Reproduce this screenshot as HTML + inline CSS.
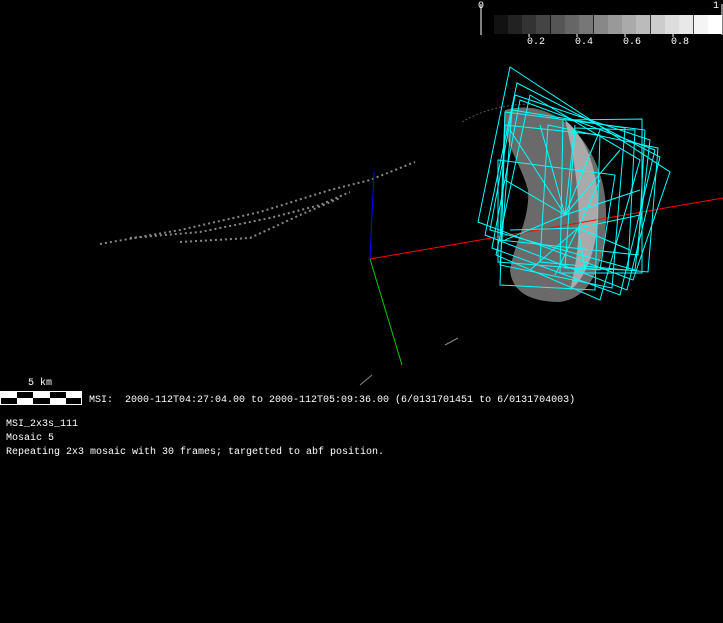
<!DOCTYPE html>
<html><head><style>
body{margin:0;background:#000;width:723px;height:623px;overflow:hidden;position:relative;font-family:"Liberation Mono",monospace;font-size:10px;color:#fff}
.t{position:absolute;white-space:pre;line-height:12px}
</style></head><body>
<svg width="723" height="623" style="position:absolute;left:0;top:0">
<g>
<line x1="481" y1="4" x2="481" y2="35" stroke="#fff"/>
<line x1="722" y1="4" x2="722" y2="35" stroke="#fff"/>
<rect x="494" y="15" width="14.3" height="19" fill="#121212"/>
<rect x="508" y="15" width="14.3" height="19" fill="#222"/>
<rect x="522" y="15" width="14.3" height="19" fill="#333"/>
<rect x="536" y="15" width="14.3" height="19" fill="#444"/>
<rect x="551" y="15" width="14.3" height="19" fill="#555"/>
<rect x="565" y="15" width="14.3" height="19" fill="#666"/>
<rect x="579" y="15" width="14.3" height="19" fill="#777"/>
<rect x="594" y="15" width="14.3" height="19" fill="#888"/>
<rect x="608" y="15" width="14.3" height="19" fill="#999"/>
<rect x="622" y="15" width="14.3" height="19" fill="#aaa"/>
<rect x="636" y="15" width="14.3" height="19" fill="#bbb"/>
<rect x="651" y="15" width="14.3" height="19" fill="#ccc"/>
<rect x="665" y="15" width="14.3" height="19" fill="#ddd"/>
<rect x="679" y="15" width="14.3" height="19" fill="#e8e8e8"/>
<rect x="694" y="15" width="14.3" height="19" fill="#f4f4f4"/>
<rect x="708" y="15" width="14" height="19" fill="#fff"/>
<g stroke="#fff"><line x1="529" y1="34" x2="529" y2="37"/><line x1="577" y1="34" x2="577" y2="37"/><line x1="625" y1="34" x2="625" y2="37"/><line x1="673" y1="34" x2="673" y2="37"/></g>
</g>
<g stroke="#888" stroke-width="2" stroke-dasharray="2 3" fill="none">
<path d="M100,244 L180,230 L260,212 L330,190 L370,180 L415,162"/>
<path d="M130,238 L200,232 L270,218 L320,205 L350,192"/>
<path d="M180,242 L250,238 L300,215 L340,198"/>
</g>
<path d="M462,122 Q490,105 530,104" stroke="#555" fill="none" stroke-dasharray="2 2"/>
<path d="M505,110 C560,95 605,150 606,210 C607,260 592,298 560,302 C530,302 512,292 510,270 C515,240 530,220 528,190 C520,160 500,140 505,110Z" fill="#6a6a6a"/>
<path d="M565,120 C590,140 600,180 598,220 C596,250 585,280 570,290 C580,250 585,200 565,120Z" fill="#aaa"/>
<!-- axes -->
<line x1="370" y1="259" x2="723" y2="198" stroke="#f00"/>
<line x1="370" y1="259" x2="374" y2="172" stroke="#00f"/>
<line x1="370" y1="259" x2="402" y2="365" stroke="#0c0"/>
<path d="M360,385 L372,375 M445,345 L458,338" stroke="#888"/>
<g fill="none" stroke="#0ff" stroke-width="1">
<polygon points="510,67 670,172 633,280 478,222"/>
<polygon points="517,83 660,157 627,290 485,235"/>
<polygon points="563,120 642,119 642,273 560,273"/>
<polygon points="515,95 650,140 635,270 490,230"/>
<polygon points="505,112 645,130 638,255 500,240"/>
<polygon points="520,100 655,150 620,295 492,248"/>
<polygon points="548,125 658,148 648,272 540,262"/>
<polygon points="505,125 600,135 595,290 500,285"/>
<polygon points="512,110 625,128 612,288 500,265"/>
<polygon points="530,95 640,160 600,300 496,255"/>
<polygon points="575,128 635,130 628,270 565,268"/>
<polygon points="498,160 615,175 600,270 498,262"/>
</g>
<g stroke="#0ff" stroke-width="1">
<line x1="565" y1="215" x2="510" y2="130"/><line x1="565" y1="215" x2="540" y2="125"/><line x1="565" y1="215" x2="575" y2="125"/><line x1="565" y1="215" x2="620" y2="150"/><line x1="565" y1="215" x2="505" y2="180"/><line x1="565" y1="215" x2="640" y2="190"/><line x1="565" y1="215" x2="505" y2="240"/><line x1="565" y1="215" x2="600" y2="130"/>
<line x1="578" y1="228" x2="530" y2="270"/><line x1="578" y1="228" x2="555" y2="275"/><line x1="578" y1="228" x2="585" y2="270"/><line x1="578" y1="228" x2="630" y2="250"/><line x1="578" y1="228" x2="640" y2="215"/><line x1="578" y1="228" x2="600" y2="180"/><line x1="578" y1="228" x2="510" y2="230"/>
</g>
<rect x="0" y="391" width="82" height="14" fill="#fff"/>
<g fill="#000"><rect x="17" y="392" width="16" height="6"/><rect x="50" y="392" width="16" height="6"/><rect x="1" y="398" width="16" height="6"/><rect x="33" y="398" width="17" height="6"/><rect x="66" y="398" width="15" height="6"/></g>
</svg>
<div class="t" style="left:478px;top:1px">0</div>
<div class="t" style="left:713px;top:1px">1</div>
<div class="t" style="left:527px;top:37px">0.2</div>
<div class="t" style="left:575px;top:37px">0.4</div>
<div class="t" style="left:623px;top:37px">0.6</div>
<div class="t" style="left:671px;top:37px">0.8</div>
<div class="t" style="left:28px;top:378px">5 km</div>
<div class="t" style="left:89px;top:395px">MSI:  2000-112T04:27:04.00 to 2000-112T05:09:36.00 (6/0131701451 to 6/0131704003)</div>
<div class="t" style="left:6px;top:419px">MSI_2x3s_111</div>
<div class="t" style="left:6px;top:433px">Mosaic 5</div>
<div class="t" style="left:6px;top:447px">Repeating 2x3 mosaic with 30 frames; targetted to abf position.</div>
</body></html>
